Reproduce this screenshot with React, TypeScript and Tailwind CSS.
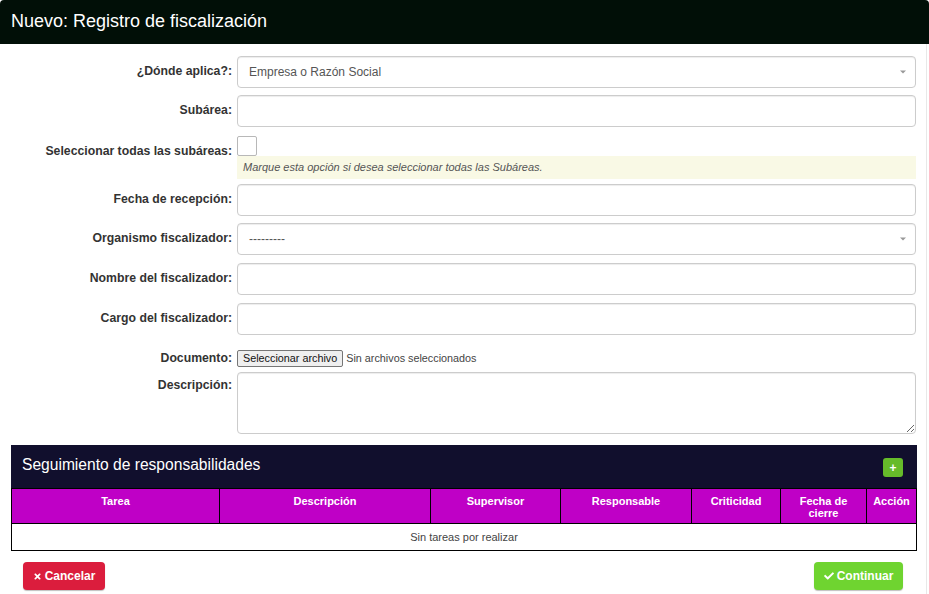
import React from 'react';
import { FaTimes, FaCheck } from 'react-icons/fa';

const Caret: React.FC = () => (
  <span className="absolute right-[9px] top-1/2 -translate-y-1/2 w-0 h-0 border-l-[3px] border-r-[3px] border-t-[3px] border-l-transparent border-r-transparent border-t-[#999]" />
);

const Row: React.FC<{ label: string; className?: string; children: React.ReactNode }> = ({ label, className = '', children }) => (
  <div className={`flex ${className}`}>
    <label className="w-[232px] shrink-0 text-right pt-[7px] text-[12.25px] leading-[17px] font-bold text-[#333]">{label}</label>
    <div className="ml-[5px] w-[679px]">{children}</div>
  </div>
);

const inputCls = 'block w-full h-[32px] rounded-[4px] border border-[#ccc] bg-white shadow-[inset_0_1px_1px_rgba(0,0,0,0.075)]';

const App: React.FC = () => {
  const cols = [
    { name: 'Tarea', w: 'w-[208px]' },
    { name: 'Descripción', w: 'w-[211px]' },
    { name: 'Supervisor', w: 'w-[130px]' },
    { name: 'Responsable', w: 'w-[131px]' },
    { name: 'Criticidad', w: 'w-[89px]' },
    { name: 'Fecha de cierre', w: 'w-[86px]' },
    { name: 'Acción', w: 'flex-1' },
  ];

  return (
    <div className="w-[929px] h-[594px] bg-white overflow-hidden font-['Liberation_Sans',Arial,sans-serif]">
      {/* Title bar */}
      <div className="h-[44px] bg-[#010f07] rounded-t-[4px] pl-[11px] flex items-center">
        <h1 className="text-[18px] text-white leading-none pb-[2px]">Nuevo: Registro de fiscalización</h1>
      </div>

      <div className="w-[927px] h-[550px] border-r border-[#e8e8e8]">
        {/* Form */}
        <div className="pt-[12px]">
          <Row label="¿Dónde aplica?:">
            <div className={`${inputCls} relative flex items-center pl-[11px] text-[12px] text-[#555]`}>
              Empresa o Razón Social
              <Caret />
            </div>
          </Row>
          <Row label="Subárea:" className="mt-[7px]">
            <div className={inputCls} />
          </Row>
          <Row label="Seleccionar todas las subáreas:" className="mt-[9px]">
            <div className="w-[20px] h-[20px] border border-[#b8b8b8] rounded-[2px] bg-white" />
            <div className="h-[23px] bg-[#f9f9e5] pl-[6px] flex items-center text-[11px] italic text-[#555]">
              Marque esta opción si desea seleccionar todas las Subáreas.
            </div>
          </Row>
          <Row label="Fecha de recepción:" className="mt-[5px]">
            <div className={inputCls} />
          </Row>
          <Row label="Organismo fiscalizador:" className="mt-[7px]">
            <div className={`${inputCls} relative flex items-center pl-[11px] text-[12px] text-[#555]`}>
              ---------
              <Caret />
            </div>
          </Row>
          <Row label="Nombre del fiscalizador:" className="mt-[8px]">
            <div className={inputCls} />
          </Row>
          <Row label="Cargo del fiscalizador:" className="mt-[8px]">
            <div className={inputCls} />
          </Row>
          <div className="flex mt-[15px] items-center">
            <span className="w-[232px] text-right text-[12.25px] font-bold text-[#333] leading-[17px]">Documento:</span>
            <div className="ml-[5px] flex items-center text-[10.8px]">
              <span className="h-[17px] px-[5px] flex items-center border border-[#767676] bg-[#efefef] rounded-[2px] text-[#111]">Seleccionar archivo</span>
              <span className="ml-[3px] text-[#444]">Sin archivos seleccionados</span>
            </div>
          </div>
          <div className="flex mt-[5px]">
            <label className="w-[232px] shrink-0 text-right pt-[5px] text-[12.25px] leading-[17px] font-bold text-[#333]">Descripción:</label>
            <textarea className="ml-[5px] block w-[679px] h-[62px] rounded-[4px] border border-[#ccc] bg-white shadow-[inset_0_1px_1px_rgba(0,0,0,0.075)] resize-y" />
          </div>
        </div>

        {/* Responsabilidades */}
        <div className="mt-[11px] mx-[11px] w-[906px]">
          <div className="h-[43px] bg-[#110f2d] flex items-center justify-between pl-[11px] pr-[14px]">
            <h2 className="text-[15.6px] text-white leading-none pb-[4px]">Seguimiento de responsabilidades</h2>
            <button className="w-[20px] h-[19px] rounded-[3px] bg-[#66bb2a] text-white text-[12px] font-bold leading-none flex items-center justify-center mt-[2px]">+</button>
          </div>
          <div className="border border-black">
            <div className="flex bg-[#bf00c6] h-[35px] border-b border-black">
              {cols.map((c, i) => (
                <div key={c.name} className={`${c.w} ${i < cols.length - 1 ? 'border-r border-black' : ''} text-center text-white font-bold text-[11px] leading-[12px] pt-[6px] px-[4px]`}>
                  {c.name}
                </div>
              ))}
            </div>
            <div className="h-[26px] flex items-center justify-center text-[11px] text-[#444]">Sin tareas por realizar</div>
          </div>
        </div>

        {/* Actions */}
        <div className="mt-[11px] flex justify-between pl-[23px] pr-[23px]">
          <button className="h-[28px] w-[82px] rounded-[4px] bg-[#db1d3d] shadow-[0_1px_1px_rgba(0,0,0,0.25)] text-white text-[12px] font-bold flex items-center justify-center gap-[3px]">
            <FaTimes className="w-[9px] h-[9px]" />Cancelar
          </button>
          <button className="h-[28px] w-[89px] rounded-[4px] bg-[#6fd430] shadow-[0_1px_1px_rgba(0,0,0,0.25)] text-white text-[12px] font-bold flex items-center justify-center gap-[3px]">
            <FaCheck className="w-[10px] h-[10px]" />Continuar
          </button>
        </div>
      </div>
    </div>
  );
};

export default App;
